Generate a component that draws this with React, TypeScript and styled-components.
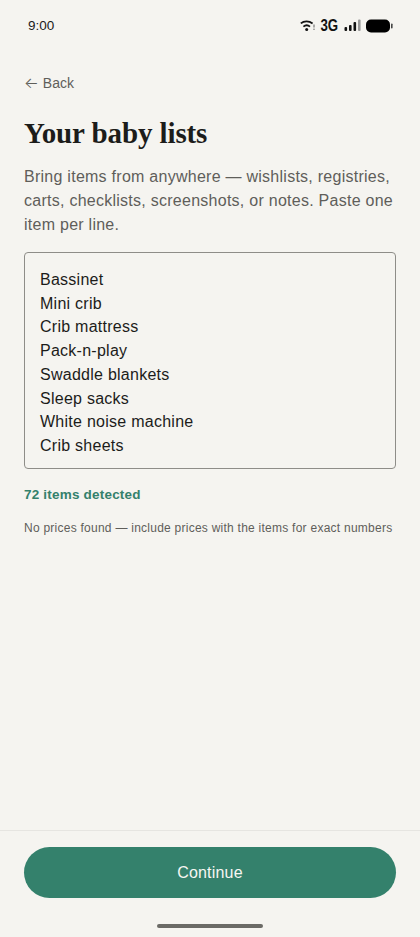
import styled, { createGlobalStyle } from "styled-components";

const items = [
  "Bassinet",
  "Mini crib",
  "Crib mattress",
  "Pack-n-play",
  "Swaddle blankets",
  "Sleep sacks",
  "White noise machine",
  "Crib sheets",
];

const GlobalStyle = createGlobalStyle`
  html, body {
    margin: 0;
    padding: 0;
    background: #f5f4f0;
  }
  * {
    box-sizing: border-box;
  }
`;

const Screen = styled.div`
  width: 420px;
  height: 937px;
  display: flex;
  flex-direction: column;
  background: #f5f4f0;
  font-family: "Liberation Sans", Arial, sans-serif;
  overflow: hidden;
`;

const StatusBar = styled.div`
  height: 51px;
  flex: none;
  display: flex;
  align-items: center;
  justify-content: space-between;
  padding: 0 27px 0 28px;
`;

const Time = styled.span`
  font-size: 13.5px;
  color: #1b1b1a;
`;

const StatusIcons = styled.div`
  display: flex;
  align-items: center;
  gap: 5px;
`;

const NetworkLabel = styled.span`
  font-size: 17px;
  font-weight: 700;
  line-height: 1;
  transform: scaleX(0.78);
  margin: 0 -2px;
  color: #111;
`;

const Main = styled.main`
  flex: 1;
  padding: 23px 24px 0;
`;

const BackLink = styled.a`
  display: flex;
  align-items: center;
  gap: 4px;
  font-size: 14px;
  line-height: 18px;
  color: #5f5e5a;
`;

const BackArrow = styled.span`
  font-family: Inter, sans-serif;
  font-size: 15.5px;
  font-weight: 300;
`;

const Title = styled.h1`
  margin: 23px 0 0;
  font-family: "Liberation Serif", serif;
  font-size: 29px;
  line-height: 36px;
  font-weight: 700;
  letter-spacing: -0.1px;
  color: #1c1c1a;
`;

const Intro = styled.p`
  margin: 14px 0 0;
  font-size: 16px;
  line-height: 24px;
  letter-spacing: 0.26px;
  color: #5f5e5a;
`;

const ListBox = styled.textarea`
  display: block;
  width: 100%;
  height: 217px;
  margin-top: 15px;
  padding: 15px;
  border: 1px solid #8e8d88;
  border-radius: 4px;
  background: transparent;
  font-family: inherit;
  font-size: 16px;
  line-height: 23.7px;
  letter-spacing: 0.26px;
  color: #1c1c1a;
  resize: none;
  overflow: hidden;
  outline: none;
`;

const ItemCount = styled.div`
  margin-top: 17px;
  font-size: 13.5px;
  line-height: 18px;
  font-weight: 700;
  letter-spacing: 0.2px;
  color: #34816c;
`;

const PriceNote = styled.div`
  margin-top: 16px;
  font-size: 12px;
  line-height: 16px;
  letter-spacing: 0.25px;
  white-space: nowrap;
  color: #5f5e5a;
`;

const Footer = styled.footer`
  flex: none;
  height: 107px;
  padding: 16px 24px 0;
  border-top: 1px solid #e6e5e1;
  display: flex;
  flex-direction: column;
  align-items: center;
`;

const ContinueButton = styled.button`
  width: 100%;
  height: 51px;
  border: none;
  border-radius: 26px;
  background: #34816c;
  color: #f7f6f2;
  font-family: inherit;
  font-size: 16px;
  letter-spacing: 0.2px;
`;

const HomeIndicator = styled.div`
  width: 106px;
  height: 4px;
  margin-top: 26px;
  border-radius: 2px;
  background: #6b6a66;
`;

const WifiIcon = () => (
  <svg width="15" height="12" viewBox="0 0 15 12" fill="none">
    <path d="M.8 3.4C4 .8 9 .8 12.6 3.4" stroke="#111" strokeWidth="1.8" />
    <path d="M3.4 6.6C5.4 5 8 5 10 6.6" stroke="#111" strokeWidth="1.8" />
    <circle cx="6.7" cy="9.6" r="1.5" fill="#111" />
    <rect x="13.4" y="4.5" width="1.2" height="3" fill="#777" />
    <rect x="13.4" y="8.6" width="1.2" height="1.4" fill="#777" />
  </svg>
);

const SignalIcon = () => (
  <svg width="17" height="13" viewBox="0 0 17 13">
    <rect x="0.5" y="8" width="2.6" height="4" rx="1" fill="#111" />
    <rect x="5" y="6" width="2.6" height="6" rx="1" fill="#111" />
    <rect x="9.5" y="3" width="2.6" height="9" rx="1" fill="#111" />
    <rect x="14" y="0.5" width="2.6" height="11.5" rx="1" fill="#999" />
  </svg>
);

const BatteryIcon = () => (
  <svg width="27" height="14" viewBox="0 0 27 14">
    <rect x="0" y="0.5" width="24" height="13" rx="5" fill="#000" />
    <rect x="25" y="4.5" width="1.6" height="5" rx="0.8" fill="#444" />
  </svg>
);

const App = () => {
  return (
    <Screen>
      <GlobalStyle />
      <StatusBar>
        <Time>9:00</Time>
        <StatusIcons>
          <WifiIcon />
          <NetworkLabel>3G</NetworkLabel>
          <SignalIcon />
          <BatteryIcon />
        </StatusIcons>
      </StatusBar>
      <Main>
        <BackLink>
          <BackArrow>←</BackArrow>
          Back
        </BackLink>
        <Title>Your baby lists</Title>
        <Intro>
          Bring items from anywhere — wishlists, registries, carts, checklists,
          screenshots, or notes. Paste one item per line.
        </Intro>
        <ListBox readOnly value={items.join("\n")} />
        <ItemCount>72 items detected</ItemCount>
        <PriceNote>
          No prices found — include prices with the items for exact numbers
        </PriceNote>
      </Main>
      <Footer>
        <ContinueButton>Continue</ContinueButton>
        <HomeIndicator />
      </Footer>
    </Screen>
  );
};

export default App;
